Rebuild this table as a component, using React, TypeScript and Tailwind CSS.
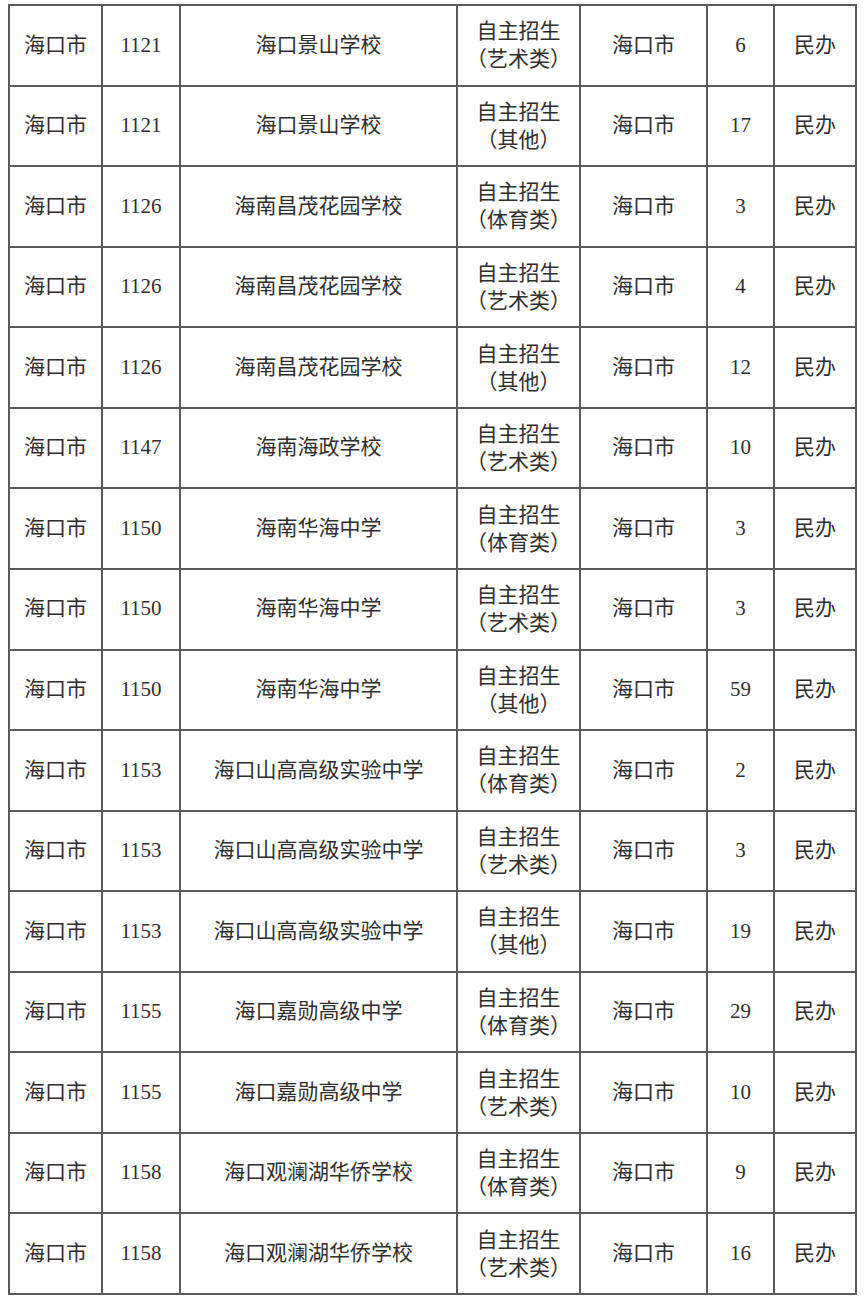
import React from "react";

const rows: [string, string, string, string, string, string, string][] = [
  ["海口市", "1121", "海口景山学校", "艺术类", "海口市", "6", "民办"],
  ["海口市", "1121", "海口景山学校", "其他", "海口市", "17", "民办"],
  ["海口市", "1126", "海南昌茂花园学校", "体育类", "海口市", "3", "民办"],
  ["海口市", "1126", "海南昌茂花园学校", "艺术类", "海口市", "4", "民办"],
  ["海口市", "1126", "海南昌茂花园学校", "其他", "海口市", "12", "民办"],
  ["海口市", "1147", "海南海政学校", "艺术类", "海口市", "10", "民办"],
  ["海口市", "1150", "海南华海中学", "体育类", "海口市", "3", "民办"],
  ["海口市", "1150", "海南华海中学", "艺术类", "海口市", "3", "民办"],
  ["海口市", "1150", "海南华海中学", "其他", "海口市", "59", "民办"],
  ["海口市", "1153", "海口山高高级实验中学", "体育类", "海口市", "2", "民办"],
  ["海口市", "1153", "海口山高高级实验中学", "艺术类", "海口市", "3", "民办"],
  ["海口市", "1153", "海口山高高级实验中学", "其他", "海口市", "19", "民办"],
  ["海口市", "1155", "海口嘉勋高级中学", "体育类", "海口市", "29", "民办"],
  ["海口市", "1155", "海口嘉勋高级中学", "艺术类", "海口市", "10", "民办"],
  ["海口市", "1158", "海口观澜湖华侨学校", "体育类", "海口市", "9", "民办"],
  ["海口市", "1158", "海口观澜湖华侨学校", "艺术类", "海口市", "16", "民办"],
];

const cell =
  "flex flex-col items-center justify-center border-r-2 border-b-2 border-[#5a5a5a] text-center";

export default function App() {
  return (
    <div
      className="w-[864px] h-[1300px] bg-white pt-[4px] pl-[8px] text-[#2e2e2e] text-[21px]"
      style={{ fontFamily: '"Liberation Serif", "Noto Sans CJK SC", serif' }}
    >
      <div className="grid w-[849px] h-[1291px] grid-cols-[93px_78px_277px_123px_127px_67px_82px] grid-rows-[repeat(16,minmax(0,1fr))] border-l-2 border-t-2 border-[#5a5a5a]">
        {rows.map((r, i) => (
          <React.Fragment key={i}>
            <div className={cell}>{r[0]}</div>
            <div className={cell}>{r[1]}</div>
            <div className={cell}>{r[2]}</div>
            <div className={cell + " leading-[28px]"}>
              <span>自主招生</span>
              <span>（{r[3]}）</span>
            </div>
            <div className={cell}>{r[4]}</div>
            <div className={cell}>{r[5]}</div>
            <div className={cell}>{r[6]}</div>
          </React.Fragment>
        ))}
      </div>
    </div>
  );
}
